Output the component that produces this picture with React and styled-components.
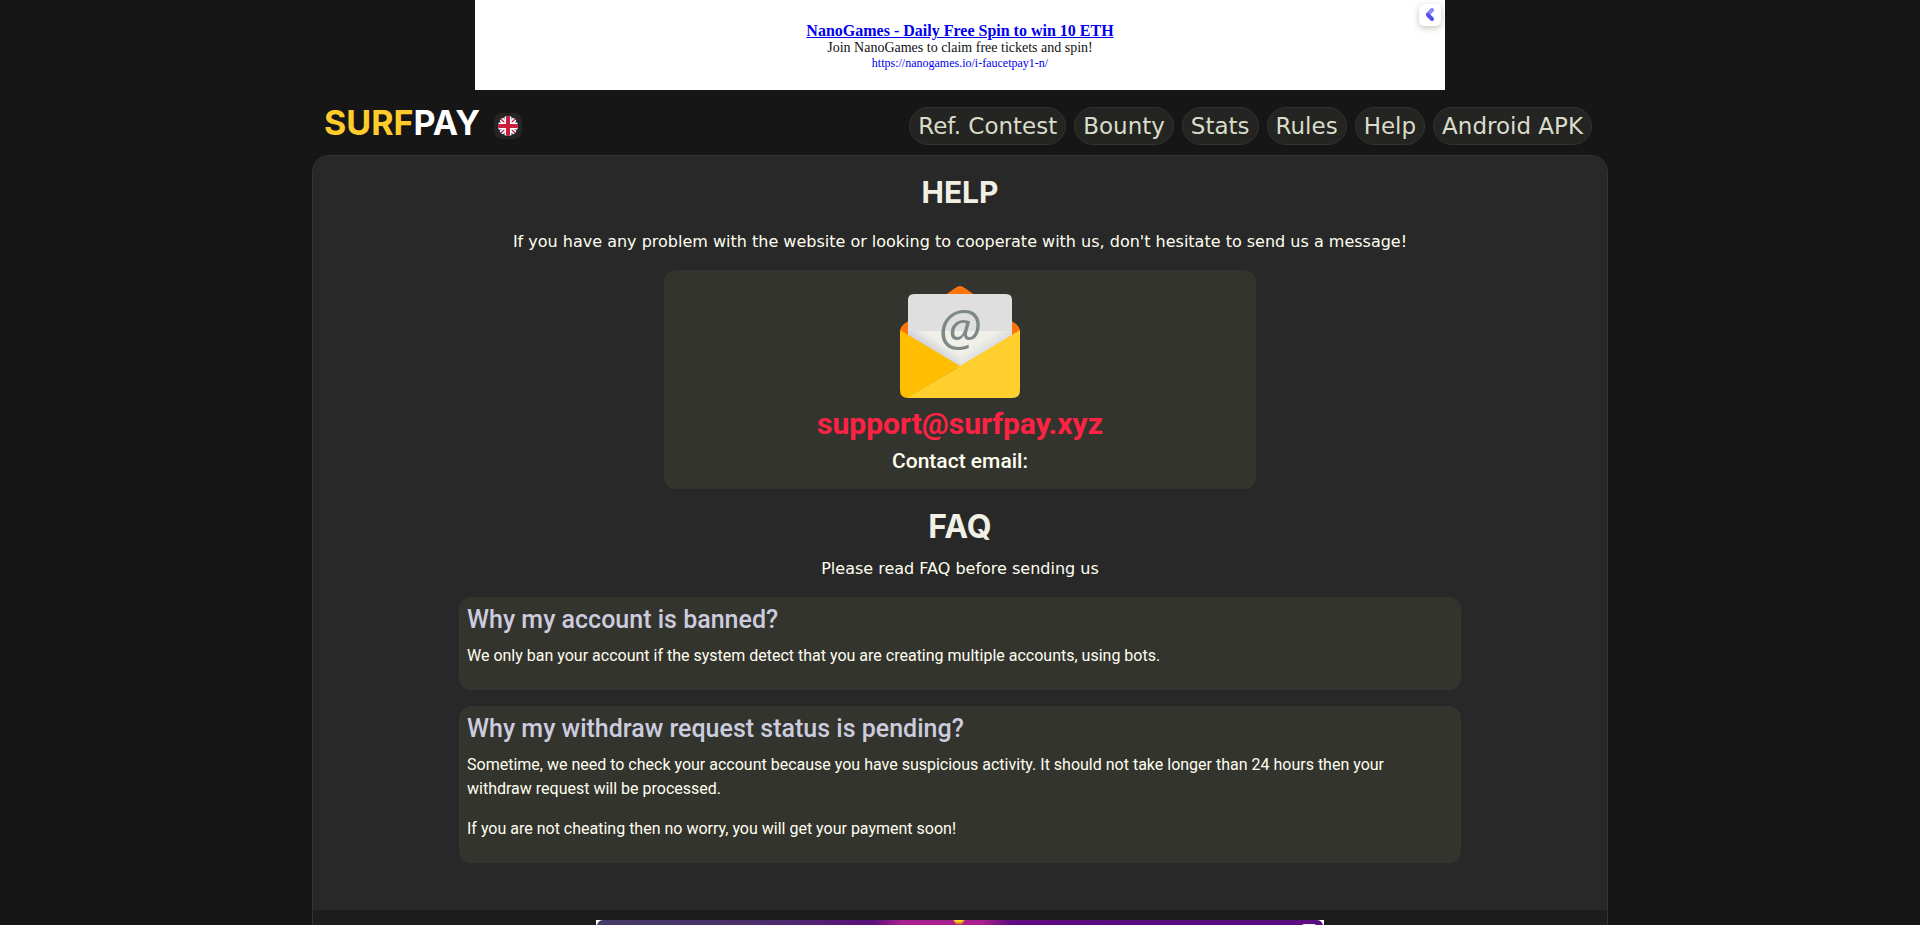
import React from 'react';
import styled, { createGlobalStyle } from 'styled-components';

const navItems = ['Ref. Contest', 'Bounty', 'Stats', 'Rules', 'Help', 'Android APK'];

const faqs = [
  {
    title: 'Why my account is banned?',
    text: ['We only ban your account if the system detect that you are creating multiple accounts, using bots.'],
  },
  {
    title: 'Why my withdraw request status is pending?',
    text: [
      'Sometime, we need to check your account because you have suspicious activity. It should not take longer than 24 hours then your withdraw request will be processed.',
      'If you are not cheating then no worry, you will get your payment soon!',
    ],
  },
];

const FlagIcon = () => (
  <svg width="20" height="20" viewBox="0 0 20 20" aria-hidden="true">
    <clipPath id="flagClip"><circle cx="10" cy="10" r="10" /></clipPath>
    <g clipPath="url(#flagClip)">
      <rect width="20" height="20" fill="#2b3a80" />
      <path d="M0 0L20 20M20 0L0 20" stroke="#fff" strokeWidth="4.5" />
      <path d="M0 0L20 20M20 0L0 20" stroke="#c8203c" strokeWidth="1.3" />
      <path d="M10 0V20M0 10H20" stroke="#fff" strokeWidth="7" />
      <path d="M10 0V20M0 10H20" stroke="#c8203c" strokeWidth="4" />
    </g>
  </svg>
);

const MailIcon = () => (
  <svg width="120" height="112" viewBox="0 0 120 112" aria-hidden="true">
    <defs>
      <linearGradient id="foldLeft" x1="40" y1="69" x2="46" y2="60" gradientUnits="userSpaceOnUse">
        <stop offset="0" stopColor="#d2d2da" />
        <stop offset="1" stopColor="#f0f0e8" />
      </linearGradient>
      <linearGradient id="foldRight" x1="80" y1="69" x2="74" y2="60" gradientUnits="userSpaceOnUse">
        <stop offset="0" stopColor="#dcdce0" />
        <stop offset="1" stopColor="#f0f0e8" />
      </linearGradient>
    </defs>
    <path d="M56 1.5Q60 -1.5 64 1.5L116 38Q120 41 120 46L60 82L0 46Q0 41 4 38Z" fill="#ff7408" />
    <path d="M8 60V14Q8 8 14 8H106Q112 8 112 14V60L60 84Z" fill="#dfdfdf" />
    <path d="M8 45H60V82L8 49Z" fill="url(#foldLeft)" />
    <path d="M112 45H60V82L112 49Z" fill="url(#foldRight)" />
    <text x="60" y="59" textAnchor="middle" fontFamily="'Open Sans', sans-serif" fontStyle="italic" fontSize="50" fill="#7f8888">@</text>
    <path d="M0 44L60 80L8 112Q0 112 0 104Z" fill="#ffbe02" />
    <path d="M120 44V104Q120 112 112 112H7L60 80Z" fill="#ffcf2d" />
  </svg>
);

const BannerArt = () => (
  <svg width="728" height="90" viewBox="0 0 728 90" role="img" aria-label="Banner">
    <defs>
      <linearGradient id="bannerFill">
        <stop offset="0" stopColor="#443c66" />
        <stop offset="0.25" stopColor="#4c2c6c" />
        <stop offset="0.38" stopColor="#5c107c" />
        <stop offset="0.42" stopColor="#a82090" />
        <stop offset="0.53" stopColor="#a82090" />
        <stop offset="0.57" stopColor="#5e0c80" />
        <stop offset="1" stopColor="#5a0c80" />
      </linearGradient>
    </defs>
    <rect width="728" height="90" fill="#fff" />
    <rect x="1" width="726" height="90" rx="6" fill="url(#bannerFill)" />
    <path d="M357 0H369L366 4H360Z" fill="#e09010" />
    <path d="M358 0H368L365 2H360Z" fill="#ffd030" />
    <rect x="706" y="4" width="14" height="14" rx="2" fill="#eee" />
  </svg>
);

const App = () => {
  return (
    <>
      <GlobalStyle />
      <AdBar>
        <AdTitle href="#">NanoGames - Daily Free Spin to win 10 ETH</AdTitle>
        <AdText>Join NanoGames to claim free tickets and spin!</AdText>
        <AdUrl href="#">https://nanogames.io/i-faucetpay1-n/</AdUrl>
        <AdToggle type="button" aria-label="Ad options">
          <svg width="10" height="14" viewBox="0 0 10 14">
            <path d="M7 2L3 6" stroke="#8f88f8" strokeWidth="4" strokeLinecap="round" />
            <path d="M3 7L7 11" stroke="#5350ee" strokeWidth="4" strokeLinecap="round" />
          </svg>
        </AdToggle>
      </AdBar>

      <Header>
        <Brand href="#"><span>SURF</span>PAY</Brand>
        <LangButton type="button" aria-label="English"><FlagIcon /></LangButton>
        <Nav>
          {navItems.map((item) => <NavLink href="#" key={item}>{item}</NavLink>)}
        </Nav>
      </Header>

      <Panel>
        <Content>
          <Heading $size={30} $gap={16}>HELP</Heading>
          <Lead>If you have any problem with the website or looking to cooperate with us, don't hesitate to send us a message!</Lead>
          <ContactCard>
            <MailIcon />
            <Email href="mailto:support@surfpay.xyz">support@surfpay.xyz</Email>
            <ContactLabel>Contact email:</ContactLabel>
          </ContactCard>
          <Heading $size={32} $gap={8}>FAQ</Heading>
          <Lead>Please read FAQ before sending us</Lead>
          <FaqList>
            {faqs.map((faq) => (
              <FaqItem key={faq.title}>
                <FaqTitle>{faq.title}</FaqTitle>
                {faq.text.map((t) => <FaqText key={t}>{t}</FaqText>)}
              </FaqItem>
            ))}
          </FaqList>
        </Content>
        <BannerRow><BannerArt /></BannerRow>
      </Panel>
    </>
  );
};

export default App;

const GlobalStyle = createGlobalStyle`
  * {
    box-sizing: border-box;
  }
  body {
    margin: 0;
    background: #161616;
    color: #fffff0;
    font-family: Roboto, sans-serif;
    font-size: 16px;
    line-height: 24px;
  }
`;

const AdBar = styled.aside`
  position: relative;
  display: flex;
  flex-direction: column;
  align-items: center;
  justify-content: center;
  max-width: 970px;
  height: 90px;
  margin: 0 auto;
  padding-top: 2px;
  background: #fff;
  color: #111;
  font-family: 'Liberation Serif', serif;
`;

const AdTitle = styled.a`
  color: #0000ee;
  font-size: 16px;
  font-weight: bold;
  line-height: 18px;
`;

const AdText = styled.span`
  font-size: 14px;
  line-height: 16px;
`;

const AdUrl = styled.a`
  color: #0000ee;
  font-size: 12px;
  line-height: 14px;
  text-decoration: none;
`;

const AdToggle = styled.button`
  position: absolute;
  top: 4px;
  right: 4px;
  display: flex;
  align-items: center;
  justify-content: center;
  width: 22px;
  height: 22px;
  padding: 0;
  border: 0;
  border-radius: 5px;
  background: #fff;
  box-shadow: 0 2px 6px rgba(60, 60, 30, 0.3);
`;

const Header = styled.header`
  display: flex;
  align-items: center;
  max-width: 1296px;
  height: 65px;
  margin: 0 auto;
  padding: 6px 16px 0 12px;
`;

const Brand = styled.a`
  color: #fff;
  font-family: Inter, sans-serif;
  font-size: 34px;
  font-weight: 700;
  line-height: 40px;
  padding-bottom: 6px;
  text-decoration: none;

  span {
    color: #ffcc2b;
  }
`;

const LangButton = styled.button`
  display: flex;
  align-items: center;
  justify-content: center;
  width: 28px;
  height: 26px;
  margin-left: 14px;
  padding: 0;
  border: 0;
  border-radius: 8px;
  background: #242422;
`;

const Nav = styled.nav`
  display: flex;
  gap: 8px;
  margin-left: auto;
`;

const NavLink = styled.a`
  padding: 0 8px;
  border: 1px solid #32322e;
  border-radius: 19px;
  background: #242422;
  color: #d8dcc8;
  font-family: 'DejaVu Sans', sans-serif;
  font-size: 23px;
  line-height: 36px;
  text-decoration: none;
  white-space: nowrap;
`;

const Panel = styled.main`
  max-width: 1296px;
  margin: 0 auto;
  border: 1px solid #343430;
  border-radius: 16px;
  background: #1d1d1d;
  overflow: hidden;
`;

const Content = styled.div`
  display: flex;
  flex-direction: column;
  align-items: center;
  padding: 16px 16px 47px;
  background: #282828;
`;

const Heading = styled.h2`
  margin: 0 0 ${(p) => p.$gap}px;
  color: #f0f0e4;
  font-family: Inter, sans-serif;
  font-size: ${(p) => p.$size}px;
  font-weight: 700;
  line-height: 40px;
`;

const Lead = styled.p`
  margin: 0 0 14px;
  font-family: 'DejaVu Sans', sans-serif;
  font-size: 16px;
  line-height: 28px;
  text-align: center;
`;

const ContactCard = styled.section`
  display: flex;
  flex-direction: column;
  align-items: center;
  gap: 8px;
  width: 100%;
  max-width: 592px;
  margin-bottom: 18px;
  padding: 16px;
  border-radius: 12px;
  background: #34342e;
`;

const Email = styled.a`
  color: #ff2244;
  font-size: 30px;
  font-weight: 700;
  line-height: 35px;
  text-decoration: none;
`;

const ContactLabel = styled.span`
  font-size: 21px;
  font-weight: 500;
  line-height: 24px;
`;

const FaqList = styled.div`
  display: flex;
  flex-direction: column;
  gap: 16px;
  width: 100%;
  max-width: 1002px;
`;

const FaqItem = styled.article`
  padding: 8px 16px 6px 8px;
  border-radius: 12px;
  background: #34342e;
`;

const FaqTitle = styled.h3`
  margin: 0 0 10px;
  color: #ccccdf;
  font-size: 25px;
  font-weight: 500;
  line-height: 29px;
`;

const FaqText = styled.p`
  margin: 0 0 16px;
`;

const BannerRow = styled.div`
  display: flex;
  justify-content: center;
  padding: 10px 0;
`;
